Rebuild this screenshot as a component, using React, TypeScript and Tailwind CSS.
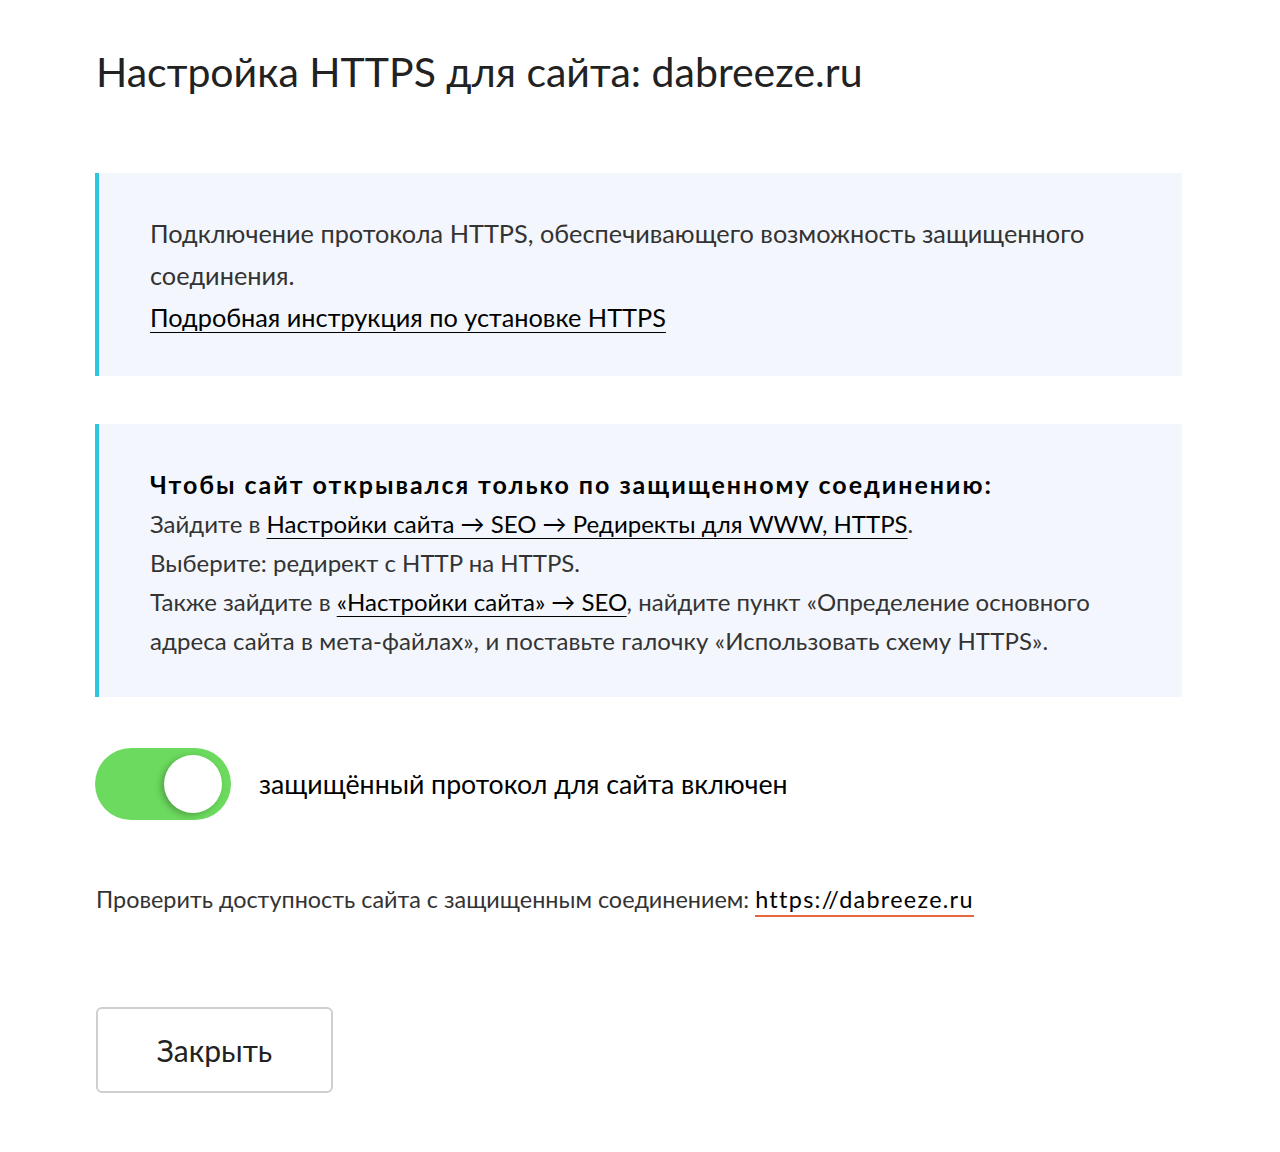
import React from "react";

const font = { fontFamily: '"Lato", "Noto Sans", sans-serif' };

function L({ children }: { children: React.ReactNode }) {
  return (
    <a className="text-black underline decoration-1 underline-offset-[5px] decoration-black" href="#">
      {children}
    </a>
  );
}

export default function App() {
  return (
    <div className="min-h-[1152px] bg-white" style={font}>
      <div className="pl-[95px] pr-[98px] pt-[43px]">
        <h1 className="pl-[1px] text-[41px] leading-[58px] text-[#222] font-normal whitespace-nowrap">
          Настройка HTTPS для сайта: dabreeze.ru
        </h1>

        <div className="mt-[72px] border-l-[4px] border-[#2ec5e1] bg-[#f3f7fd] pl-[51px] pt-[39px] pb-[38px] text-[25.3px] leading-[42px] text-[#333]">
          <div className="whitespace-nowrap">Подключение протокола HTTPS, обеспечивающего возможность защищенного</div>
          <div>соединения.</div>
          <div>
            <L>Подробная инструкция по установке HTTPS</L>
          </div>
        </div>

        <div className="mt-[48px] border-l-[4px] border-[#2ec5e1] bg-[#f3f7fd] pl-[51px] pt-[41px] pb-[37px] text-[24px] leading-[39px] text-[#333]">
          <div className="whitespace-nowrap text-[25px] font-bold tracking-[1.95px] text-black">
            Чтобы сайт открывался только по защищенному соединению:
          </div>
          <div className="whitespace-nowrap">
            Зайдите в <L>Настройки сайта → SEO → Редиректы для WWW, HTTPS</L>.
          </div>
          <div>Выберите: редирект с HTTP на HTTPS.</div>
          <div className="whitespace-nowrap">
            Также зайдите в <L>«Настройки сайта» → SEO</L>, найдите пункт «Определение основного
          </div>
          <div className="whitespace-nowrap tracking-[0.1px]">
            адреса сайта в мета-файлах», и поставьте галочку «Использовать схему HTTPS».
          </div>
        </div>

        <div className="mt-[51px] flex items-center gap-[28px]">
          <div className="flex h-[72px] w-[136px] items-center justify-end rounded-full bg-[#6cda5e] pr-[9px]">
            <div className="h-[58px] w-[58px] rounded-full bg-white shadow-[-3px_2px_6px_rgba(0,0,0,0.25)]" />
          </div>
          <div className="text-[26.7px] leading-[36px] text-black whitespace-nowrap">
            защищённый протокол для сайта включен
          </div>
        </div>

        <div className="mt-[62px] pl-[1px] text-[23.4px] leading-[34px] text-[#333] whitespace-nowrap">
          Проверить доступность сайта с защищенным соединением:{" "}
          <a href="#" className="text-black border-b-2 border-[#e8663f] pb-[2px] tracking-[1.3px]">
            https://dabreeze.ru
          </a>
        </div>

        <div className="mt-[91px] pl-[1px]">
          <button className="flex h-[86px] w-[237px] items-center justify-center rounded-[6px] border-2 border-[#cfcfcf] bg-white text-[30px] text-[#222]">
            Закрыть
          </button>
        </div>
      </div>
    </div>
  );
}
